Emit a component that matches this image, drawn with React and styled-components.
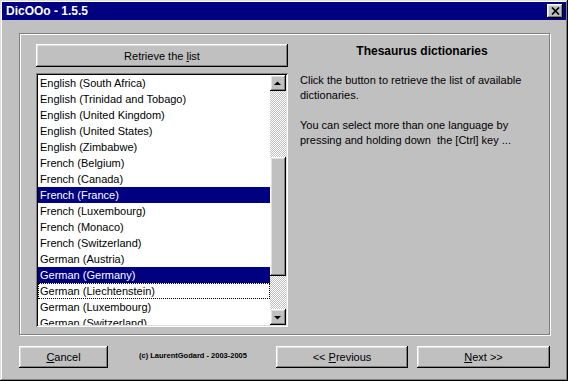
import React from 'react';
import styled, { createGlobalStyle, css } from 'styled-components';

const GlobalStyle = createGlobalStyle`
  html, body {
    margin: 0;
    padding: 0;
    background: #c0c0c0;
  }
`;

// classic win9x bevels
const raised = css`
  box-shadow: inset -1px -1px #000, inset 1px 1px #fff,
    inset -2px -2px #808080, inset 2px 2px #dfdfdf;
`;

const sunken = css`
  box-shadow: inset 1px 1px #808080, inset -1px -1px #fff,
    inset 2px 2px #000, inset -2px -2px #dfdfdf;
`;

const Window = styled.div`
  width: 568px;
  height: 381px;
  box-sizing: border-box;
  padding: 2px;
  display: flex;
  flex-direction: column;
  background: #c0c0c0;
  box-shadow: inset -1px -1px #000, inset 1px 1px #dfdfdf,
    inset -2px -2px #808080, inset 2px 2px #fff;
  font-family: "Liberation Sans", Arial, sans-serif;
  font-size: 11px;
  color: #000;
`;

const TitleBar = styled.div`
  height: 18px;
  flex: none;
  display: flex;
  align-items: center;
  padding: 0 3px 0 4px;
  background: #000080;
  color: #fff;
  font-weight: bold;
  font-size: 12px;
`;

const CloseButton = styled.div`
  width: 16px;
  height: 14px;
  margin-left: auto;
  background: #c0c0c0;
  display: flex;
  align-items: center;
  justify-content: center;
  ${raised}
`;

const Client = styled.div`
  flex: 1;
  display: flex;
  flex-direction: column;
  padding: 13px 16px 0 17px;
`;

const GroupBox = styled.div`
  height: 302px;
  box-sizing: border-box;
  border: 1px solid #808080;
  box-shadow: 1px 1px 0 #fff, inset 1px 1px 0 #fff;
  padding: 10px 0 0 16px;
  display: grid;
  grid-template-columns: 252px 252px;
  grid-template-rows: 23px 254px;
  column-gap: 8px;
  row-gap: 6px;
`;

const Button = styled.button`
  box-sizing: border-box;
  width: ${p => p.$w || 'auto'};
  height: ${p => p.$h || '22px'};
  padding: 0;
  border: none;
  background: #c0c0c0;
  font: inherit;
  color: #000;
  ${raised}
`;

const Key = styled.span`
  text-decoration: underline;
`;

const Heading = styled.div`
  font-weight: bold;
  font-size: 12px;
  line-height: 15px;
  text-align: center;
`;

const Help = styled.div`
  padding-left: 4px;
  line-height: 15px;
  white-space: pre;
`;

const Para = styled.p`
  margin: 0 0 15px;
`;

const ListBox = styled.div`
  box-sizing: border-box;
  padding: 2px;
  display: flex;
  background: #fff;
  overflow: hidden;
  ${sunken}
`;

const Items = styled.div`
  flex: 1;
  overflow: hidden;
`;

const Item = styled.div`
  box-sizing: border-box;
  height: 16px;
  line-height: 16px;
  padding-left: 2px;
  white-space: nowrap;
  background: ${p => (p.$selected ? '#000080' : 'transparent')};
  color: ${p => (p.$selected ? '#fff' : '#000')};
  outline: ${p => (p.$focused ? '1px dotted #000' : 'none')};
  outline-offset: -1px;
`;

const ScrollBar = styled.div`
  width: 16px;
  display: flex;
  flex-direction: column;
`;

const ScrollArrow = styled.div`
  width: 16px;
  height: 16px;
  flex: none;
  background: #c0c0c0;
  ${raised}
`;

const Track = styled.div`
  flex: 1;
  display: flex;
  flex-direction: column;
  background: repeating-conic-gradient(#fff 0 25%, #c0c0c0 0 50%) 0 0 / 2px 2px;
`;

const Thumb = styled.div`
  height: ${p => p.$size}px;
  flex: none;
  background: #c0c0c0;
  ${raised}
`;

const Footer = styled.div`
  display: flex;
  align-items: center;
  margin-top: 11px;
  height: 22px;
`;

const Copyright = styled.div`
  flex: 1;
  margin-left: 31px;
  padding-bottom: 3px;
  font-size: 7.5px;
  font-weight: bold;
`;

const Spacer = styled.div`
  width: 9px;
`;

const languages = [
  'English (South Africa)',
  'English (Trinidad and Tobago)',
  'English (United Kingdom)',
  'English (United States)',
  'English (Zimbabwe)',
  'French (Belgium)',
  'French (Canada)',
  'French (France)',
  'French (Luxembourg)',
  'French (Monaco)',
  'French (Switzerland)',
  'German (Austria)',
  'German (Germany)',
  'German (Liechtenstein)',
  'German (Luxembourg)',
  'German (Switzerland)',
];

const selected = ['French (France)', 'German (Germany)'];
const focused = 'German (Liechtenstein)';

const Arrow = ({ up }) => (
  <svg width="16" height="16" viewBox="0 0 16 16">
    <polygon
      points={up ? '4,10 7.5,6.5 11,10' : '4,7 11,7 7.5,10.5'}
      fill="#000"
    />
  </svg>
);

export default function App() {
  return (
    <>
      <GlobalStyle />
      <Window>
        <TitleBar>
          DicOOo - 1.5.5
          <CloseButton>
            <svg width="9" height="8" viewBox="0 0 9 8">
              <path d="M1 0.5 L8 7.5 M8 0.5 L1 7.5" stroke="#000" strokeWidth="1.7" />
            </svg>
          </CloseButton>
        </TitleBar>
        <Client>
          <GroupBox>
            <Button $h="23px">
              Retrieve the <Key>l</Key>ist
            </Button>
            <Heading>Thesaurus dictionaries</Heading>
            <ListBox>
              <Items>
                {languages.map(l => (
                  <Item key={l} $selected={selected.includes(l)} $focused={l === focused}>
                    {l}
                  </Item>
                ))}
              </Items>
              <ScrollBar>
                <ScrollArrow>
                  <Arrow up />
                </ScrollArrow>
                <Track>
                  <div style={{ height: 66 }} />
                  <Thumb $size={119} />
                </Track>
                <ScrollArrow>
                  <Arrow />
                </ScrollArrow>
              </ScrollBar>
            </ListBox>
            <Help>
              <Para>
                {'Click the button to retrieve the list of available\ndictionaries.'}
              </Para>
              <Para>
                {'You can select more than one language by\npressing and holding down  the [Ctrl] key ...'}
              </Para>
            </Help>
          </GroupBox>
          <Footer>
            <Button $w="89px">
              <Key>C</Key>ancel
            </Button>
            <Copyright>(c) LaurentGodard - 2003-2005</Copyright>
            <Button $w="132px">
              {'<< '}
              <Key>P</Key>revious
            </Button>
            <Spacer />
            <Button $w="133px">
              <Key>N</Key>ext {'>>'}
            </Button>
          </Footer>
        </Client>
      </Window>
    </>
  );
}
